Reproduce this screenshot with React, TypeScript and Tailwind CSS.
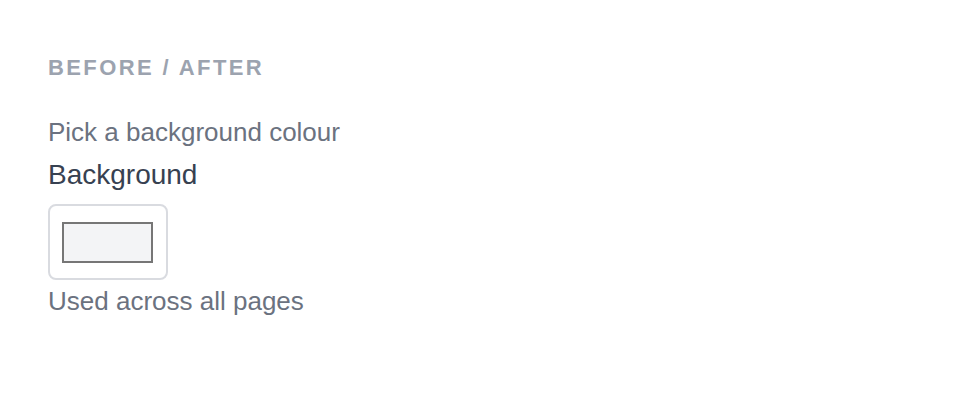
const App = () => {
    return (
        <div className="min-h-[406px] bg-white px-12 pt-[52px] font-['Liberation_Sans',Arial,sans-serif]">
            <h2 className="text-[22px] leading-[32px] font-bold tracking-[2.4px] uppercase text-[#9ca3af]">Before / After</h2>
            <p className="mt-[30px] text-[26px] leading-[36px] text-[#6b7280]">Pick a background colour</p>
            <label className="mt-[5px] block text-[28px] leading-[40px] text-[#374151]">Background</label>
            <div className="mt-[9px] flex h-[76px] w-[120px] items-center justify-center rounded-lg border-2 border-[#d9dbe0] bg-white">
                <div className="h-[41px] w-[91px] -translate-x-px border-2 border-[#767676] bg-[#f3f4f6]" />
            </div>
            <p className="mt-[3px] text-[26px] leading-[36px] text-[#6b7280]">Used across all pages</p>
        </div>
    )
}

export default App
